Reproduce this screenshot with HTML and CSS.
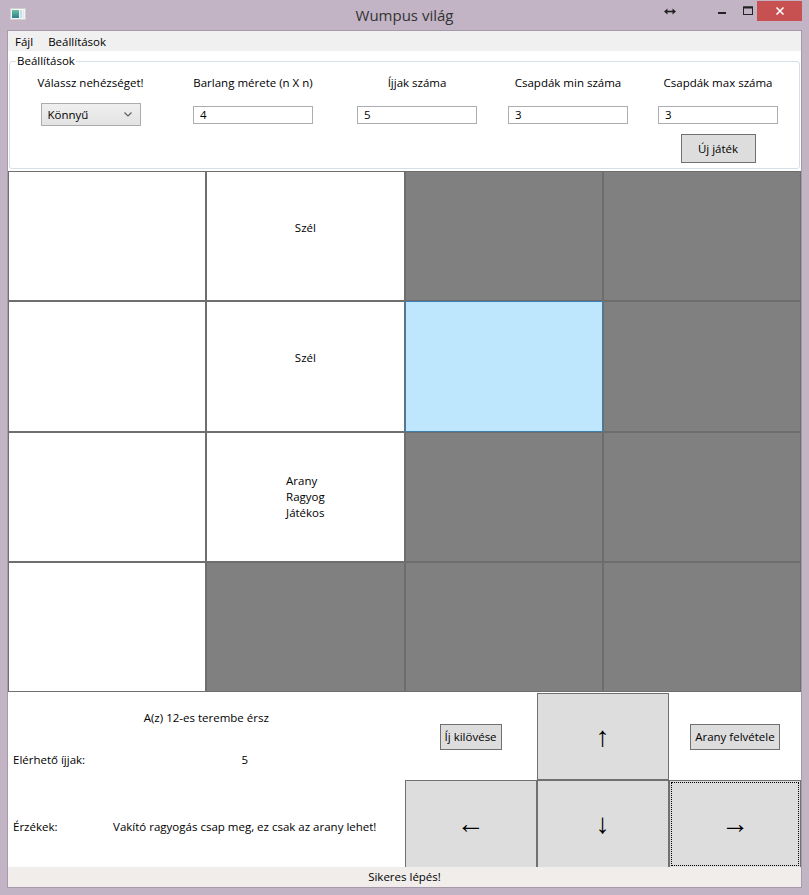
FILE: index.html
```html
<!DOCTYPE html>
<html lang="hu">
<head>
    <meta charset="UTF-8">
    <title>Wumpus világ</title>
    <link rel="stylesheet" href="styles.css">
</head>
<body>
<div class="window">
    <!-- Title bar -->
    <div class="titlebar">
        <svg class="app-icon" width="16" height="12" viewBox="0 0 16 12">
            <defs>
                <linearGradient id="ico" x1="0" y1="0" x2="0" y2="1">
                    <stop offset="0" stop-color="#6cc1a6"/>
                    <stop offset="1" stop-color="#2a7f8c"/>
                </linearGradient>
            </defs>
            <rect x="0.5" y="0.5" width="15" height="11" fill="#f6f6f6" stroke="#cfcfcf"/>
            <rect x="2" y="2" width="7" height="8" fill="url(#ico)"/>
            <rect x="10" y="2" width="2" height="8" fill="#bfe0ec"/>
            <rect x="13" y="2" width="1" height="8" fill="#d8e8ee"/>
        </svg>
        <div class="title">Wumpus világ</div>
        <div class="caption-buttons">
            <svg class="resize-icon" width="12" height="7" viewBox="0 0 12 7">
                <path d="M3 3.5 H9" stroke="#222" stroke-width="1.6"/>
                <path d="M0 3.5 L3.5 0.5 V6.5 Z M12 3.5 L8.5 0.5 V6.5 Z" fill="#222"/>
            </svg>
            <div class="cap-btn">
                <svg width="10" height="10" viewBox="0 0 10 10"><rect x="1" y="6" width="8" height="2" fill="#222"/></svg>
            </div>
            <div class="cap-btn">
                <svg width="12" height="10" viewBox="0 0 12 10"><rect x="1.5" y="1" width="9" height="7.5" fill="none" stroke="#222" stroke-width="1"/><rect x="1" y="0.5" width="10" height="2" fill="#222"/></svg>
            </div>
            <div class="cap-btn close">
                <svg width="10" height="10" viewBox="0 0 10 10"><path d="M1.5 1.5 L8.5 8.5 M8.5 1.5 L1.5 8.5" stroke="#fff" stroke-width="1.6"/></svg>
            </div>
        </div>
    </div>

    <div class="client">
        <!-- Menu -->
        <div class="menu">
            <span class="menu-item">Fájl</span>
            <span class="menu-item">Beállítások</span>
        </div>

        <!-- Settings group -->
        <div class="settings-wrap">
            <fieldset class="settings">
                <legend>Beállítások</legend>
                <div class="settings-grid">
                    <div class="lbl">Válassz nehézséget!</div>
                    <div class="lbl">Barlang mérete (n X n)</div>
                    <div class="lbl">Íjjak száma</div>
                    <div class="lbl">Csapdák min száma</div>
                    <div class="lbl">Csapdák max száma</div>

                    <div class="combo">
                        <span>Könnyű</span>
                        <svg width="8" height="5" viewBox="0 0 8 5"><path d="M0.5 0.5 L4 4 L7.5 0.5" fill="none" stroke="#606060" stroke-width="1.2"/></svg>
                    </div>
                    <div class="textbox">4</div>
                    <div class="textbox">5</div>
                    <div class="textbox">3</div>
                    <div class="textbox">3</div>

                    <div class="new-game"><button class="btn">Új játék</button></div>
                </div>
            </fieldset>
        </div>

        <!-- Cave grid -->
        <div class="cave">
            <div class="cell"></div>
            <div class="cell"><div class="cell-text">Szél<br>&nbsp;</div></div>
            <div class="cell dark"></div>
            <div class="cell dark"></div>

            <div class="cell"></div>
            <div class="cell"><div class="cell-text">Szél<br>&nbsp;</div></div>
            <div class="cell current"></div>
            <div class="cell dark"></div>

            <div class="cell"></div>
            <div class="cell"><div class="cell-text">Arany<br>Ragyog<br>Játékos</div></div>
            <div class="cell dark"></div>
            <div class="cell dark"></div>

            <div class="cell"></div>
            <div class="cell dark"></div>
            <div class="cell dark"></div>
            <div class="cell dark"></div>
        </div>

        <!-- Controls -->
        <div class="controls">
            <div class="info">
                <div class="info-room">A(z) 12-es terembe érsz</div>
                <div class="info-label">Elérhető íjjak:</div>
                <div class="info-value">5</div>
                <div class="info-label senses">Érzékek:</div>
                <div class="info-value senses">Vakító ragyogás csap meg, ez csak az arany lehet!</div>
            </div>
            <div class="slot"><button class="btn small">Íj kilövése</button></div>
            <button class="arrow">↑</button>
            <div class="slot"><button class="btn small">Arany felvétele</button></div>
            <button class="arrow">←</button>
            <button class="arrow">↓</button>
            <button class="arrow focused">→</button>
        </div>

        <!-- Status bar -->
        <div class="statusbar">Sikeres lépés!</div>
    </div>
</div>
</body>
</html>
```

FILE: styles.css
```css
/* Reset */
* {
    box-sizing: border-box;
    margin: 0;
    padding: 0;
}

body {
    font-family: 'Open Sans', sans-serif;
    font-size: 11.5px;
    color: #000;
    background-color: #c2b3c5;
}

/* Window frame */
.window {
    width: 809px;
    height: 895px;
    background-color: #c2b3c5;
    display: flex;
    flex-direction: column;
}

.titlebar {
    height: 30px;
    display: flex;
    align-items: flex-start;
    position: relative;
}

.app-icon {
    margin: 8px 0 0 10px;
}

.title {
    position: absolute;
    left: 0;
    right: 0;
    top: 5px;
    text-align: center;
    font-size: 15px;
    color: #333;
    line-height: 20px;
    pointer-events: none;
}

.caption-buttons {
    margin-left: auto;
    margin-right: 7px;
    display: flex;
    align-items: flex-start;
}

.resize-icon {
    margin: 8px 33px 0 0;
}

.cap-btn {
    width: 26px;
    height: 21px;
    display: flex;
    align-items: center;
    justify-content: center;
}

.cap-btn.close {
    width: 45px;
    margin-left: -4px;
    margin-top: 1px;
    height: 20px;
    background-color: #c75050;
}

/* Client area */
.client {
    flex: 1;
    margin: 0 7px 7px 7px;
    border: 1px solid #a699a9;
    background-color: #fff;
    display: flex;
    flex-direction: column;
}

.menu {
    height: 20px;
    background-color: #f0f0f0;
    display: flex;
    align-items: center;
    padding-left: 7px;
    gap: 15px;
}

/* Settings */
.settings-wrap {
    height: 120px;
    padding: 2px 2px 2px 1px;
}

.settings {
    height: 100%;
    border: 1px solid #d5dfe5;
    border-radius: 3px;
    padding: 0;
}

.settings legend {
    margin-left: 6px;
    padding: 0 1px;
    line-height: 16px;
}

.settings-grid {
    display: grid;
    grid-template-columns: 161px 164px 164px 138px 162px;
    grid-template-rows: 28px 31px 29px;
    padding-top: 6px;
}

.lbl {
    text-align: center;
    line-height: 16px;
    white-space: nowrap;
}

.combo {
    justify-self: center;
    width: 100px;
    height: 23px;
    border: 1px solid #acacac;
    background: linear-gradient(#efefef, #e3e3e3);
    display: flex;
    align-items: center;
    justify-content: space-between;
    padding: 0 8px 0 6px;
}

.textbox {
    justify-self: center;
    width: 120px;
    height: 18px;
    margin-top: 3px;
    border: 1px solid #abadb3;
    background-color: #fff;
    padding-left: 6px;
    line-height: 16px;
}

.new-game {
    grid-column: 5;
    grid-row: 3;
    display: flex;
    justify-content: center;
}

.btn {
    font-family: inherit;
    font-size: 11.5px;
    color: #000;
    background-color: #dddddd;
    border: 1px solid #707070;
}

.new-game .btn {
    width: 75px;
    height: 29px;
}

/* Cave grid */
.cave {
    height: 521px;
    display: grid;
    grid-template-columns: repeat(4, 1fr);
    grid-template-rows: repeat(4, 1fr);
}

.cell {
    border: 1px solid #6f6f6f;
    background-color: #fff;
    display: flex;
    align-items: center;
    justify-content: center;
}

.cell.dark {
    background-color: #808080;
    border-color: #6d6d6d;
}

.cell.current {
    background-color: #bee6fd;
    border-color: #3c7fb1;
}

.cell-text {
    line-height: 16px;
    text-align: left;
}

/* Controls */
.controls {
    height: 175px;
    display: grid;
    grid-template-columns: repeat(6, 1fr);
    grid-template-rows: 87px 88px;
    padding-top: 1px;
}

.info {
    grid-column: 1 / 4;
    grid-row: 1 / 3;
    display: grid;
    grid-template-columns: 77px 1fr;
    grid-template-rows: 46px 40px 1fr;
    align-items: center;
}

.info-room {
    grid-column: 1 / 3;
    text-align: center;
    padding-top: 2px;
}

.info-label {
    padding-left: 5px;
    white-space: nowrap;
}

.info-value {
    text-align: center;
}

.senses {
    padding-top: 6px;
}

.slot {
    display: flex;
    align-items: center;
    justify-content: center;
}

.btn.small {
    height: 26px;
    padding: 0 4px;
}

.arrow {
    font-family: 'Liberation Sans', sans-serif;
    font-size: 28px;
    color: #000;
    background-color: #dddddd;
    border: 1px solid #707070;
}

.arrow.focused {
    outline: 1px dotted #000;
    outline-offset: -3px;
}

/* Status bar */
.statusbar {
    height: 20px;
    background-color: #f0edeb;
    text-align: center;
    line-height: 20px;
}
```
